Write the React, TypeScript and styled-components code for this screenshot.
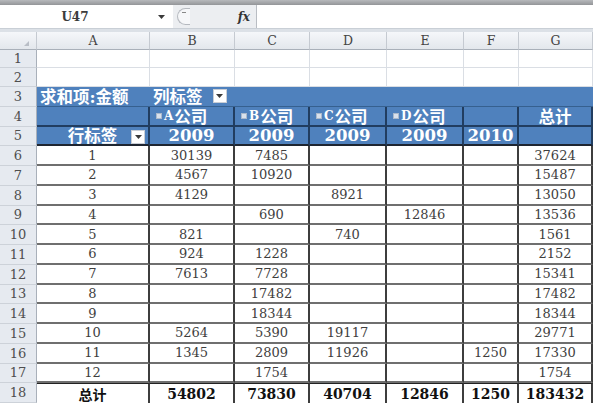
import React from 'react';
import styled, { createGlobalStyle, css } from 'styled-components';

const GlobalStyle = createGlobalStyle`
  html, body { margin: 0; padding: 0; background: #fff; overflow: hidden; }
  body { width: 593px; height: 406px; font-family: "DejaVu Serif", "Noto Sans CJK SC", serif; }
  * { box-sizing: border-box; }
`;

const Window = styled.div`
  width: 593px;
  height: 406px;
  display: flex;
  flex-direction: column;
  overflow: hidden;
`;

const TopStrip = styled.div`
  flex: none;
  height: 5px;
  background: linear-gradient(#b7b9bc, #939598);
`;

const FormulaBar = styled.div`
  flex: none;
  height: 23px;
  display: flex;
  align-items: stretch;
  background: #fff;
`;

const NameBox = styled.div`
  width: 150px;
  display: flex;
  align-items: center;
  justify-content: center;
  font-size: 12px;
  font-weight: bold;
  color: #3c3c3c;
`;

const NameArrow = styled.div`
  width: 23px;
  display: flex;
  align-items: center;
  justify-content: center;
`;

const FxZone = styled.div`
  width: 84px;
  display: flex;
  align-items: center;
  justify-content: space-between;
  padding: 0 6px 0 4px;
  background: #eceef1;
  border-right: 1px solid #b9bdc3;
`;

const Bracket = styled.div`
  width: 13px;
  height: 17px;
  border: 1px solid #b5b9bf;
  border-right: none;
  border-radius: 9px 0 0 9px;
  background: #f6f7f9;
  display: flex;
  align-items: flex-start;
  justify-content: center;
  padding-top: 3px;
`;

const Tick = styled.div`
  width: 4px;
  height: 1px;
  background: #888;
`;

const Fx = styled.span`
  font-size: 12px;
  font-style: italic;
  font-weight: bold;
  color: #333;
`;

const FormulaInput = styled.div`
  flex: 1;
  background: #fff;
`;

const Separator = styled.div`
  flex: none;
  height: 4px;
  background: #dce1e7;
  border-top: 1px solid #c9cfd6;
`;

const Sheet = styled.div`
  display: grid;
  grid-template-columns: 37px 113px 85px 75px 77px 77px 55px 74px;
  grid-template-rows: 18px 18px 19px repeat(16, 19.75px);
`;

const ColHeader = styled.div`
  display: flex;
  align-items: center;
  justify-content: center;
  background: linear-gradient(#f5f7fa, #e3e7ec);
  border-right: 1px solid #c5cad1;
  border-bottom: 1px solid #a9b0b9;
  font-size: 12.5px;
  color: #444;
`;

const Corner = styled(ColHeader)`
  position: relative;
`;

const CornerMark = styled.div`
  position: absolute;
  right: 7px;
  bottom: 3px;
  width: 0;
  height: 0;
  border-left: 5px solid transparent;
  border-bottom: 5px solid #b9bec6;
`;

const RowHeader = styled.div`
  display: flex;
  align-items: center;
  justify-content: center;
  background: #e6eaf0;
  border-right: 1px solid #a9b0ba;
  border-bottom: 1px solid #cdd2d9;
  font-size: 13px;
  color: #4e4e4e;
`;

type Variant = 'empty' | 'band' | 'head' | 'headLast' | 'data' | 'total';

const Cell = styled.div<{ $v: Variant; $align?: 'left' | 'center' }>`
  position: relative;
  display: flex;
  align-items: center;
  justify-content: ${(p) => (p.$align === 'left' ? 'flex-start' : 'center')};
  white-space: nowrap;
  overflow: hidden;
  ${(p) =>
    p.$v === 'empty' &&
    css`
      background: #fff;
      border-right: 1px solid #dadee4;
      border-bottom: 1px solid #dadee4;
    `}
  ${(p) =>
    p.$v === 'band' &&
    css`
      background: #4f81bd;
      color: #fff;
      font-weight: bold;
      font-size: 16.5px;
      padding-left: 3px;
      border-bottom: 1px solid #36608f;
    `}
  ${(p) =>
    (p.$v === 'head' || p.$v === 'headLast') &&
    css`
      background: #4f81bd;
      color: #fff;
      font-weight: bold;
      font-size: 16.5px;
      border-right: 2px solid #213d60;
      border-bottom: 2px solid ${p.$v === 'headLast' ? '#1e2530' : '#213d60'};
    `}
  ${(p) =>
    p.$v === 'data' &&
    css`
      background: #fff;
      color: #3e3e3e;
      font-size: 13px;
      border-right: 2px solid #3d3d3d;
      border-bottom: 2px solid #6f6f6f;
    `}
  ${(p) =>
    p.$v === 'total' &&
    css`
      background: #fff;
      color: #111;
      font-weight: bold;
      font-size: 14px;
      border-top: 1px solid #222;
      border-right: 2px solid #3d3d3d;
    `}
`;

const HeadLeft = styled.div`
  display: flex;
  align-items: center;
  gap: 1px;
  width: 100%;
  padding-left: 6px;
`;

const CollapseBox = styled.span`
  display: inline-block;
  width: 6px;
  height: 6px;
  background: #d9e1ec;
  border: 1px solid #aab9cc;
  margin-right: 1px;
`;

const Letter = styled.span`
  font-size: 12px;
`;

const BandLabel = styled.div`
  display: flex;
  align-items: center;
  gap: 10px;
`;

const DropButton = styled.span<{ $over?: boolean }>`
  display: inline-flex;
  align-items: center;
  justify-content: center;
  width: 14px;
  height: 14px;
  background: #fff;
  border: 1px solid #c9ced6;
  ${(p) =>
    p.$over &&
    css`
      position: absolute;
      right: 3px;
      top: 3px;
    `}
`;

const Arrow = () => (
  <svg width="7" height="4" viewBox="0 0 7 4">
    <path d="M0 0 L7 0 L3.5 4 Z" fill="#3a3a3a" />
  </svg>
);

const cols = ['A', 'B', 'C', 'D', 'E', 'F', 'G'];

const rows: (string | number)[][] = [
  [1, 30139, 7485, '', '', '', 37624],
  [2, 4567, 10920, '', '', '', 15487],
  [3, 4129, '', 8921, '', '', 13050],
  [4, '', 690, '', 12846, '', 13536],
  [5, 821, '', 740, '', '', 1561],
  [6, 924, 1228, '', '', '', 2152],
  [7, 7613, 7728, '', '', '', 15341],
  [8, '', 17482, '', '', '', 17482],
  [9, '', 18344, '', '', '', 18344],
  [10, 5264, 5390, 19117, '', '', 29771],
  [11, 1345, 2809, 11926, '', 1250, 17330],
  [12, '', 1754, '', '', '', 1754],
];

const totals = ['总计', 54802, 73830, 40704, 12846, 1250, 183432];

const companies = ['A', 'B', 'C', 'D'];

export default function App() {
  return (
    <Window>
      <GlobalStyle />
      <TopStrip />
      <FormulaBar>
        <NameBox>U47</NameBox>
        <NameArrow>
          <Arrow />
        </NameArrow>
        <FxZone>
          <Bracket>
            <Tick />
          </Bracket>
          <Fx>fx</Fx>
        </FxZone>
        <FormulaInput />
      </FormulaBar>
      <Separator />
      <Sheet>
        <Corner>
          <CornerMark />
        </Corner>
        {cols.map((c) => (
          <ColHeader key={c}>{c}</ColHeader>
        ))}

        {[1, 2].map((r) => (
          <React.Fragment key={r}>
            <RowHeader>{r}</RowHeader>
            {cols.map((c) => (
              <Cell key={c} $v="empty" />
            ))}
          </React.Fragment>
        ))}

        <RowHeader>3</RowHeader>
        <Cell $v="band" $align="left">求和项:金额</Cell>
        <Cell $v="band" $align="left">
          <BandLabel>
            列标签
            <DropButton>
              <Arrow />
            </DropButton>
          </BandLabel>
        </Cell>
        {[0, 1, 2, 3, 4].map((i) => (
          <Cell key={i} $v="band" />
        ))}

        <RowHeader>4</RowHeader>
        <Cell $v="head" />
        {companies.map((co) => (
          <Cell key={co} $v="head" $align="left">
            <HeadLeft>
              <CollapseBox />
              <Letter>{co}</Letter>公司
            </HeadLeft>
          </Cell>
        ))}
        <Cell $v="head" />
        <Cell $v="head">总计</Cell>

        <RowHeader>5</RowHeader>
        <Cell $v="headLast">
          行标签
          <DropButton $over>
            <Arrow />
          </DropButton>
        </Cell>
        {['2009', '2009', '2009', '2009', '2010', ''].map((y, i) => (
          <Cell key={i} $v="headLast">
            {y}
          </Cell>
        ))}

        {rows.map((row, ri) => (
          <React.Fragment key={ri}>
            <RowHeader>{ri + 6}</RowHeader>
            {row.map((v, ci) => (
              <Cell key={ci} $v="data">
                {v}
              </Cell>
            ))}
          </React.Fragment>
        ))}

        <RowHeader>18</RowHeader>
        {totals.map((v, i) => (
          <Cell key={i} $v="total">
            {v}
          </Cell>
        ))}
      </Sheet>
    </Window>
  );
}
